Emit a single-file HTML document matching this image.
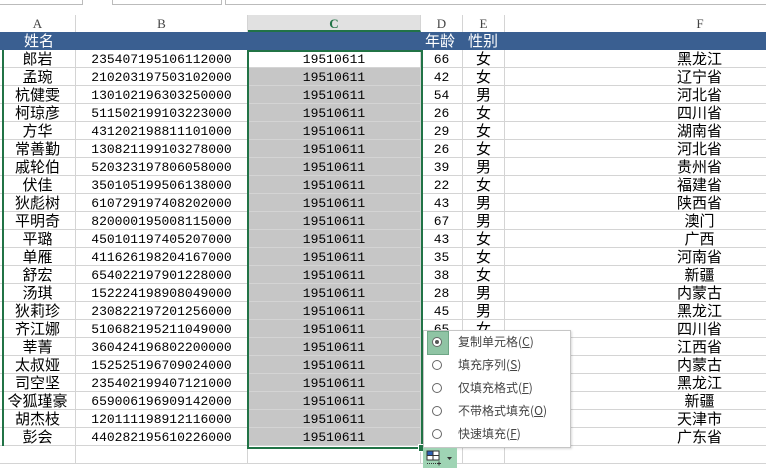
<!DOCTYPE html>
<html><head><meta charset="utf-8"><style>
body{margin:0;width:766px;height:468px;overflow:hidden;background:#fff;position:relative;font-family:"Liberation Mono","Noto Sans CJK SC",monospace;}
.a{position:absolute;}
.hdr{position:absolute;top:15px;height:17px;font:13px "Liberation Serif","Noto Serif CJK SC",serif;color:#444;text-align:center;line-height:17px;border-right:1px solid #d4d4d4;box-sizing:border-box}
.cell{position:absolute;height:18px;line-height:19px;text-align:center;font-size:13px;color:#000;border-right:1px solid #d4d4d4;border-bottom:1px solid #d4d4d4;box-sizing:border-box;white-space:nowrap}
.cj{font-family:"Noto Sans CJK SC",sans-serif;font-size:15px;line-height:18px}
.mi{position:absolute;left:458px;font:12px "Noto Sans CJK SC",sans-serif;color:#444}
.rd{position:absolute;left:432px;width:8px;height:8px;border:1px solid #666;border-radius:50%;background:#fff}
</style></head><body>
<div class="a" style="left:0;top:0;width:82px;height:4px;border-right:1px solid #bbb;border-bottom:1px solid #bbb"></div>
<div class="a" style="left:112px;top:0;width:108px;height:4px;border:1px solid #bbb;border-top:0"></div>
<div class="a" style="left:225px;top:0;width:541px;height:4px;border-left:1px solid #bbb;border-bottom:1px solid #bbb"></div>
<div style="position:absolute;left:0;top:0;width:766px;height:468px;overflow:hidden">
<div class="hdr" style="left:0;width:76px">A</div>
<div class="hdr" style="left:76px;width:172px">B</div>
<div class="hdr" style="left:248px;width:173px;background:#e1e1e1;border-bottom:2px solid #217346;color:#217346;font-weight:bold">C</div>
<div class="hdr" style="left:421px;width:42px">D</div>
<div class="hdr" style="left:463px;width:42px">E</div>
<div class="hdr" style="left:505px;width:390px;border-right:0">F</div>
<div class="a" style="left:0;top:32px;width:766px;height:18px;background:#3a5f91"></div>
<div class="a cj" style="left:24px;top:32px;line-height:18px;color:#fff">姓名</div>
<div class="a cj" style="left:425px;top:32px;line-height:18px;color:#fff">年龄</div>
<div class="a cj" style="left:468px;top:32px;line-height:18px;color:#fff">性别</div>
<div id="g"></div>
</div>
<script>
var d=[["郎岩","235407195106112000",66,"女","黑龙江"],["孟琬","210203197503102000",42,"女","辽宁省"],["杭健雯","130102196303250000",54,"男","河北省"],["柯琼彦","511502199103223000",26,"女","四川省"],["方华","431202198811101000",29,"女","湖南省"],["常善勤","130821199103278000",26,"女","河北省"],["戚轮伯","520323197806058000",39,"男","贵州省"],["伏佳","350105199506138000",22,"女","福建省"],["狄彪树","610729197408202000",43,"男","陕西省"],["平明奇","820000195008115000",67,"男","澳门"],["平璐","450101197405207000",43,"女","广西"],["单雁","411626198204167000",35,"女","河南省"],["舒宏","654022197901228000",38,"女","新疆"],["汤琪","152224198908049000",28,"男","内蒙古"],["狄莉珍","230822197201256000",45,"男","黑龙江"],["齐江娜","510682195211049000",65,"女","四川省"],["莘菁","360424196802200000",49,"女","江西省"],["太叔娅","152525196709024000",50,"女","内蒙古"],["司空坚","235402199407121000",23,"男","黑龙江"],["令狐瑾豪","659006196909142000",48,"男","新疆"],["胡杰枝","120111198912116000",28,"男","天津市"],["彭会","440282195610226000",61,"女","广东省"]];
var h="";var cols=[[0,76],[76,172],[248,173],[421,42],[463,42],[505,390]];
for(var i=0;i<23;i++){var y=50+i*18;var r=d[i]||["","","","",""];
var v=[r[0],r[1],i<22?"19510611":"",r[2],r[3],r[4]];
for(var c=0;c<6;c++){var bg=(c==2&&i>0&&i<22)?"background:#c6c6c6;":"";var cl=(c==0||c==4||c==5)?"cell cj":"cell";
h+='<div class="'+cl+'" style="left:'+cols[c][0]+'px;top:'+y+'px;width:'+cols[c][1]+'px;'+bg+'">'+v[c]+'</div>';}}
document.getElementById("g").innerHTML=h;
</script>
<div class="a" style="left:2px;top:50px;width:2px;height:396px;background:#217346"></div>
<div class="a" style="left:247px;top:50px;width:172px;height:395px;border:2px solid #217346"></div>
<div class="a" style="left:418px;top:444px;width:6px;height:6px;background:#217346;border:1px solid #fff"></div>
<div class="a" style="left:423px;top:330px;width:146px;height:116px;background:#fff;border:1px solid #c6c6c6;box-shadow:1px 1px 2px rgba(0,0,0,.15)"></div>
<div class="a" style="left:427px;top:331px;width:20px;height:22px;background:#8fc4a4;border:1px solid #6ea585"></div>
<div class="rd" style="top:337px"></div><div class="a" style="left:435px;top:340px;width:4px;height:4px;border-radius:50%;background:#555"></div>
<div class="rd" style="top:360px"></div><div class="rd" style="top:383px"></div><div class="rd" style="top:406px"></div><div class="rd" style="top:429px"></div>
<div class="mi" style="top:333px">复制单元格(<u>C</u>)</div>
<div class="mi" style="top:356px">填充序列(<u>S</u>)</div>
<div class="mi" style="top:379px">仅填充格式(<u>F</u>)</div>
<div class="mi" style="top:402px">不带格式填充(<u>O</u>)</div>
<div class="mi" style="top:425px">快速填充(<u>F</u>)</div>
<div class="a" style="left:423px;top:448px;width:34px;height:20px;background:#9fd4b4"></div>
<svg class="a" style="left:426px;top:450px" width="30" height="16"><rect x="1" y="1" width="12" height="9" fill="#fff" stroke="#333"/><rect x="1.5" y="1.5" width="5" height="4" fill="#2b5fb4"/><line x1="1" y1="5.5" x2="13" y2="5.5" stroke="#333"/><line x1="7" y1="1" x2="7" y2="10" stroke="#333"/><line x1="1" y1="13.5" x2="10" y2="13.5" stroke="#333" stroke-dasharray="1 1"/><path d="M11 13.5h4M13 11.5v4" stroke="#333"/><path d="M21 7h5l-2.5 3z" fill="#333"/></svg>
</body></html>
